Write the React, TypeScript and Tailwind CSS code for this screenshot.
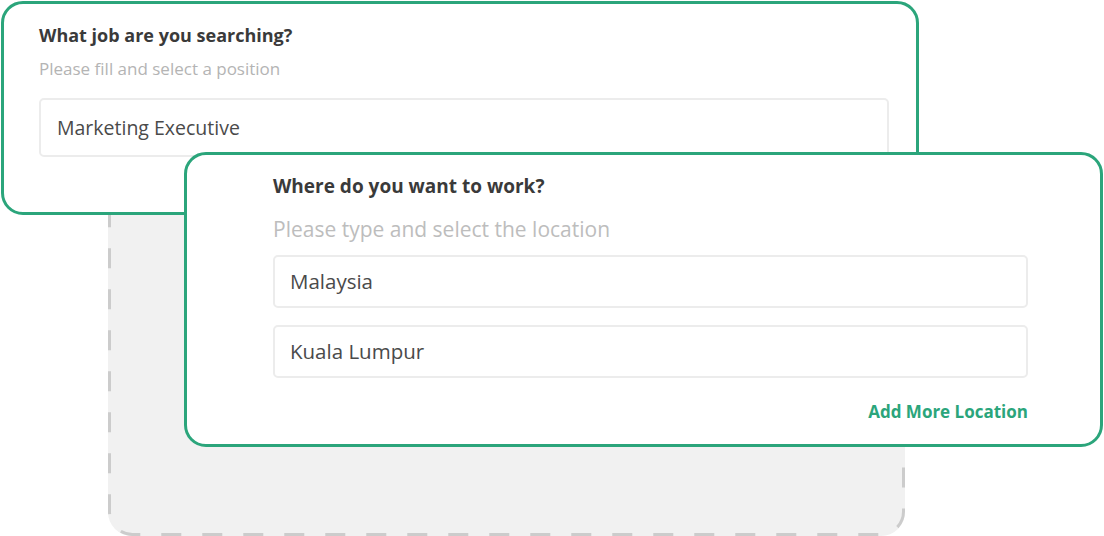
import React from 'react';

const font = { fontFamily: '"Open Sans", "Noto Sans", sans-serif' };

function Field({ value, className }: { value: string; className: string }) {
  return (
    <div className={`flex items-center rounded-[5px] border-2 border-[#ececec] bg-white ${className}`}>
      <span className="text-[#4a4a4a]">{value}</span>
    </div>
  );
}

export default function App() {
  return (
    <div className="relative h-[536px] w-[1104px] overflow-hidden bg-white" style={font}>
      {/* dashed placeholder card behind */}
      <div className="absolute left-[108px] top-[120px] h-[416px] w-[797px] rounded-[24px] bg-[#f1f1f1]">
        <svg className="absolute inset-0" width="797" height="416">
          <rect
            x="1.5"
            y="1.5"
            width="794"
            height="413"
            rx="23"
            fill="none"
            stroke="#cccccc"
            strokeWidth="3"
            strokeDasharray="20 21"
          />
        </svg>
      </div>

      {/* job card */}
      <div className="absolute left-[1px] top-[1px] h-[214px] w-[918px] rounded-[22px] border-[3px] border-[#2ba57b] bg-white">
        <div className="flex flex-col pl-[35px] pr-[27px] pt-[18px]">
          <h2 className="text-[18px] font-bold leading-[26px] text-[#3a3a3a]">What job are you searching?</h2>
          <p className="mt-[10px] text-[17px] leading-[22px] text-[#b4b4b4]">Please fill and select a position</p>
          <Field value="Marketing Executive" className="mt-[18px] h-[59px] pl-[16px] text-[19.5px]" />
        </div>
      </div>

      {/* location card */}
      <div className="absolute left-[184px] top-[152px] h-[295px] w-[919px] rounded-[22px] border-[3px] border-[#2ba57b] bg-white">
        <div className="flex flex-col pl-[86px] pr-[72px] pt-[18px]">
          <h2 className="text-[19px] font-bold leading-[26px] text-[#3a3a3a]">Where do you want to work?</h2>
          <p className="mt-[16px] text-[21px] leading-[28px] text-[#bdbdbd]">Please type and select the location</p>
          <Field value="Malaysia" className="mt-[12px] h-[53px] pl-[15px] text-[20.5px]" />
          <Field value="Kuala Lumpur" className="mt-[17px] h-[53px] pl-[15px] text-[20.5px]" />
          <div className="mt-[22px] flex justify-end">
            <button className="text-[17px] font-bold leading-[24px] text-[#2ba57b]">Add More Location</button>
          </div>
        </div>
      </div>
    </div>
  );
}
